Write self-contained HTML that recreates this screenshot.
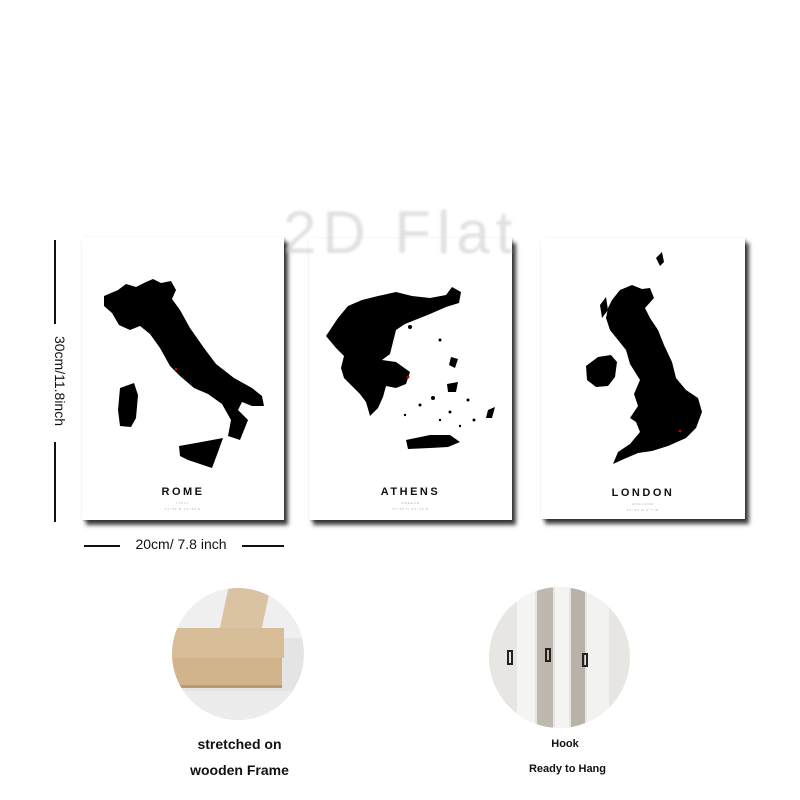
<!DOCTYPE html>
<html><head><meta charset="utf-8"><style>
*{margin:0;padding:0;box-sizing:border-box}
body{width:800px;height:800px;background:#fff;position:relative;overflow:hidden;font-family:"Liberation Sans",sans-serif}
.p{position:absolute;background:#fff;box-shadow:4px 5px 4px rgba(0,0,0,.75),1px 1px 2px rgba(0,0,0,.3)}
.t{position:absolute;left:0;right:0;text-align:center;font-weight:bold;font-size:11px;letter-spacing:2.5px;color:#111}
.s{position:absolute;left:0;right:0;text-align:center;font-size:3px;color:#aaa;letter-spacing:1px}
.wm{position:absolute;left:283px;top:198px;font-size:60px;color:rgba(200,200,200,.55);letter-spacing:6px;filter:blur(1.2px);z-index:5}
.c{position:absolute;border-radius:50%;overflow:hidden}
.lab{position:absolute;text-align:center;font-weight:bold;color:#111}
</style></head><body>
<div class="wm">2D Flat</div>

<div class="p" style="left:82px;top:237px;width:202px;height:283px">
<svg width="202" height="283" style="position:absolute;left:0;top:0">
<g transform="translate(-82,-237)" fill="#000">
<path d="M104,296 L118,290 L126,284 L136,287 L146,282 L153,279 L161,283 L171,281 L176,290 L172,299 L180,310 L190,328 L204,348 L216,364 L234,378 L252,388 L262,396 L264,406 L252,406 L242,402 L238,410 L248,420 L240,440 L228,436 L231,420 L222,404 L208,394 L194,388 L180,376 L170,366 L160,348 L150,334 L140,326 L130,330 L119,325 L112,313 L104,306 Z"/>
<path d="M120,388 L134,383 L138,395 L136,418 L131,427 L120,426 L118,410 Z"/>
<path d="M179,446 L196,443 L223,438 L218,452 L212,468 L200,464 L188,460 L180,456 Z"/>
<circle cx="176" cy="369" r="1.3" fill="#c00"/>
</g></svg>
<div class="t" style="top:249px">ROME</div>
<div class="s" style="top:264px">ITALY</div>
<div class="s" style="top:270px">41°54′N 12°29′E</div>
</div>

<div class="p" style="left:309px;top:238px;width:203px;height:282px">
<svg width="203" height="282" style="position:absolute;left:0;top:0">
<g transform="translate(-309,-238)" fill="#000">
<path d="M326,336 L338,318 L348,306 L362,300 L378,296 L396,292 L412,296 L430,298 L446,295 L452,287 L461,292 L459,303 L446,307 L430,314 L415,320 L405,324 L396,330 L393,342 L390,354 L382,360 L396,362 L410,372 L406,384 L396,388 L386,386 L383,397 L378,408 L370,416 L366,402 L360,394 L352,386 L344,378 L341,368 L344,356 L336,348 Z"/>
<path d="M406,440 L430,435 L450,435 L460,442 L448,447 L430,448 L408,449 Z"/>
<path d="M447,384 L458,382 L456,392 L448,392 Z"/>
<path d="M488,410 L495,407 L492,418 L486,418 Z"/>
<path d="M451,357 L458,359 L455,368 L449,365 Z"/>
<circle cx="410" cy="327" r="2"/><circle cx="440" cy="340" r="1.5"/><circle cx="433" cy="398" r="2"/><circle cx="420" cy="405" r="1.5"/><circle cx="450" cy="412" r="1.5"/><circle cx="468" cy="400" r="1.5"/><circle cx="474" cy="420" r="1.5"/><circle cx="440" cy="420" r="1.2"/><circle cx="405" cy="415" r="1.2"/><circle cx="460" cy="426" r="1.2"/>
<circle cx="408" cy="377" r="1.5" fill="#c00"/>
</g></svg>
<div class="t" style="top:248px">ATHENS</div>
<div class="s" style="top:263px">GREECE</div>
<div class="s" style="top:269px">37°58′N 23°43′E</div>
</div>

<div class="p" style="left:541px;top:238px;width:204px;height:281px">
<svg width="204" height="281" style="position:absolute;left:0;top:0">
<g transform="translate(-541,-238)" fill="#000">
<path d="M612,300 L620,290 L632,285 L642,289 L650,288 L654,298 L645,308 L650,318 L658,330 L664,345 L672,362 L676,378 L686,390 L698,398 L702,412 L696,428 L686,438 L668,446 L652,451 L638,453 L624,459 L613,464 L618,452 L630,444 L640,432 L636,422 L630,418 L638,406 L634,394 L640,380 L630,364 L626,350 L618,340 L610,330 L606,318 L608,308 Z"/>
<path d="M586,366 L598,357 L611,355 L617,362 L615,377 L608,386 L596,387 L587,380 Z"/>
<path d="M600,305 L606,297 L608,310 L602,318 Z"/>
<path d="M656,258 L662,252 L664,262 L660,266 Z"/>
<circle cx="680" cy="431" r="1.3" fill="#c00"/>
</g></svg>
<div class="t" style="top:249px">LONDON</div>
<div class="s" style="top:264px">ENGLAND</div>
<div class="s" style="top:270px">51°30′N 0°7′W</div>
</div>

<div style="position:absolute;left:54px;top:240px;width:1.5px;height:282px;background:#111"></div>
<div style="position:absolute;left:54px;top:324px;width:14px;height:118px;background:#fff"></div>
<div style="position:absolute;left:-15px;top:373px;width:150px;text-align:center;font-size:14px;color:#111;transform:rotate(90deg)">30cm/11.8inch</div>

<div style="position:absolute;left:84px;top:545px;width:36px;height:1.5px;background:#111"></div>
<div style="position:absolute;left:242px;top:545px;width:42px;height:1.5px;background:#111"></div>
<div style="position:absolute;left:118px;top:536px;width:126px;text-align:center;font-size:14px;color:#111">20cm/ 7.8 inch</div>

<div class="c" style="left:172px;top:588px;width:132px;height:132px;background:#e4e4e4">
<div style="position:absolute;left:0;top:0;width:132px;height:50px;background:#efefef"></div>
<div style="position:absolute;left:50px;top:-5px;width:42px;height:70px;background:#d9c3a3;transform:skewX(-12deg)"></div>
<div style="position:absolute;left:0;top:40px;width:112px;height:30px;background:#d6bd98"></div>
<div style="position:absolute;left:0;top:70px;width:110px;height:30px;background:#d2b48c;border-bottom:3px solid #b99a70"></div>
<div style="position:absolute;left:0;top:103px;width:132px;height:35px;background:#ececec"></div>
</div>
<div class="lab" style="left:172px;top:731px;width:135px;font-size:14px;line-height:26px">stretched on<br>wooden Frame</div>

<div class="c" style="left:489px;top:587px;width:141px;height:141px;background:#e8e6e2">
<div style="position:absolute;left:28px;top:0;width:18px;height:141px;background:#f4f4f2"></div>
<div style="position:absolute;left:48px;top:0;width:16px;height:141px;background:#bfb8ae"></div>
<div style="position:absolute;left:66px;top:0;width:14px;height:141px;background:#f4f4f2"></div>
<div style="position:absolute;left:82px;top:0;width:14px;height:141px;background:#b8b2a8"></div>
<div style="position:absolute;left:98px;top:0;width:22px;height:141px;background:#f2f2f0"></div>
<div style="position:absolute;left:18px;top:63px;width:6px;height:15px;border:2px solid #222"></div>
<div style="position:absolute;left:56px;top:61px;width:6px;height:14px;border:2px solid #222"></div>
<div style="position:absolute;left:93px;top:66px;width:6px;height:14px;border:2px solid #222"></div>
</div>
<div class="lab" style="left:500px;top:738px;width:130px;font-size:11px">Hook</div>
<div class="lab" style="left:500px;top:763px;width:135px;font-size:11px">Ready to Hang</div>
</body></html>
